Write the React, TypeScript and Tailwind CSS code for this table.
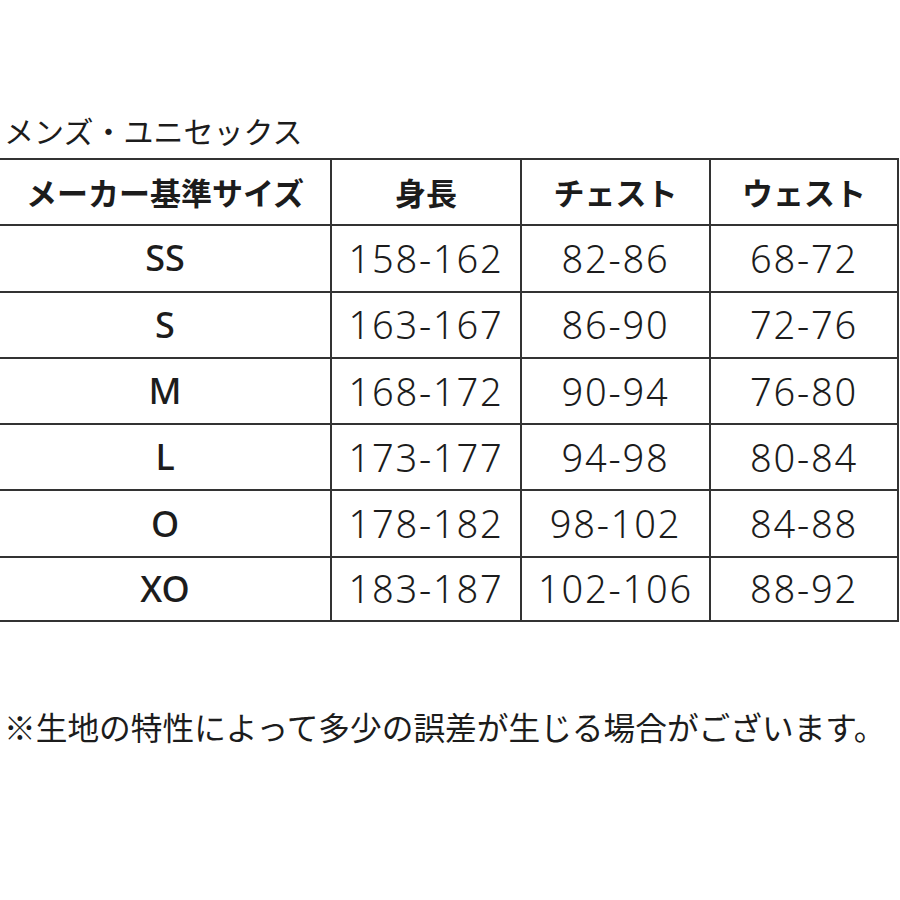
import React from "react";

const rows = [
  ["SS", "158-162", "82-86", "68-72"],
  ["S", "163-167", "86-90", "72-76"],
  ["M", "168-172", "90-94", "76-80"],
  ["L", "173-177", "94-98", "80-84"],
  ["O", "178-182", "98-102", "84-88"],
  ["XO", "183-187", "102-106", "88-92"],
];

const jp = { fontFamily: '"Noto Sans CJK JP", sans-serif' };
const num = { fontFamily: '"Noto Sans", "Noto Sans CJK JP", sans-serif' };

function Row({ cells, head, last }: { cells: string[]; head?: boolean; last?: boolean }) {
  return (
    <div
      className={`grid grid-cols-[330px_190px_189px_190px] h-[66.3px] border-t-2 border-[#333] ${
        last ? "border-b-2" : ""
      }`}
    >
      {cells.map((c, i) => (
        <div
          key={i}
          style={head ? jp : num}
          className={`flex items-center justify-center text-[#1c1c1c] ${
            i > 0 ? "border-l-2 border-[#333]" : ""
          } ${i === 3 ? "border-r-2" : ""} ${
            head
              ? "text-[31px] font-semibold"
              : i === 0
              ? "text-[36px] font-medium"
              : "text-[38px] tracking-[1.8px] font-light"
          }`}
        >
          {c}
        </div>
      ))}
    </div>
  );
}

export default function App() {
  return (
    <div className="w-[900px] h-[900px] bg-white pt-[108px]">
      <h2 style={jp} className="text-[30px] leading-[44px] text-[#1c1c1c] pl-[4px] mb-[6px]">
        メンズ・ユニセックス
      </h2>
      <div className="w-[899px]">
        <Row head cells={["メーカー基準サイズ", "身長", "チェスト", "ウェスト"]} />
        {rows.map((r, i) => (
          <Row key={i} cells={r} last={i === rows.length - 1} />
        ))}
      </div>
      <p style={jp} className="text-[31.7px] leading-[44px] text-[#1c1c1c] pl-[4px] mt-[82px]">
        ※生地の特性によって多少の誤差が生じる場合がございます。
      </p>
    </div>
  );
}
